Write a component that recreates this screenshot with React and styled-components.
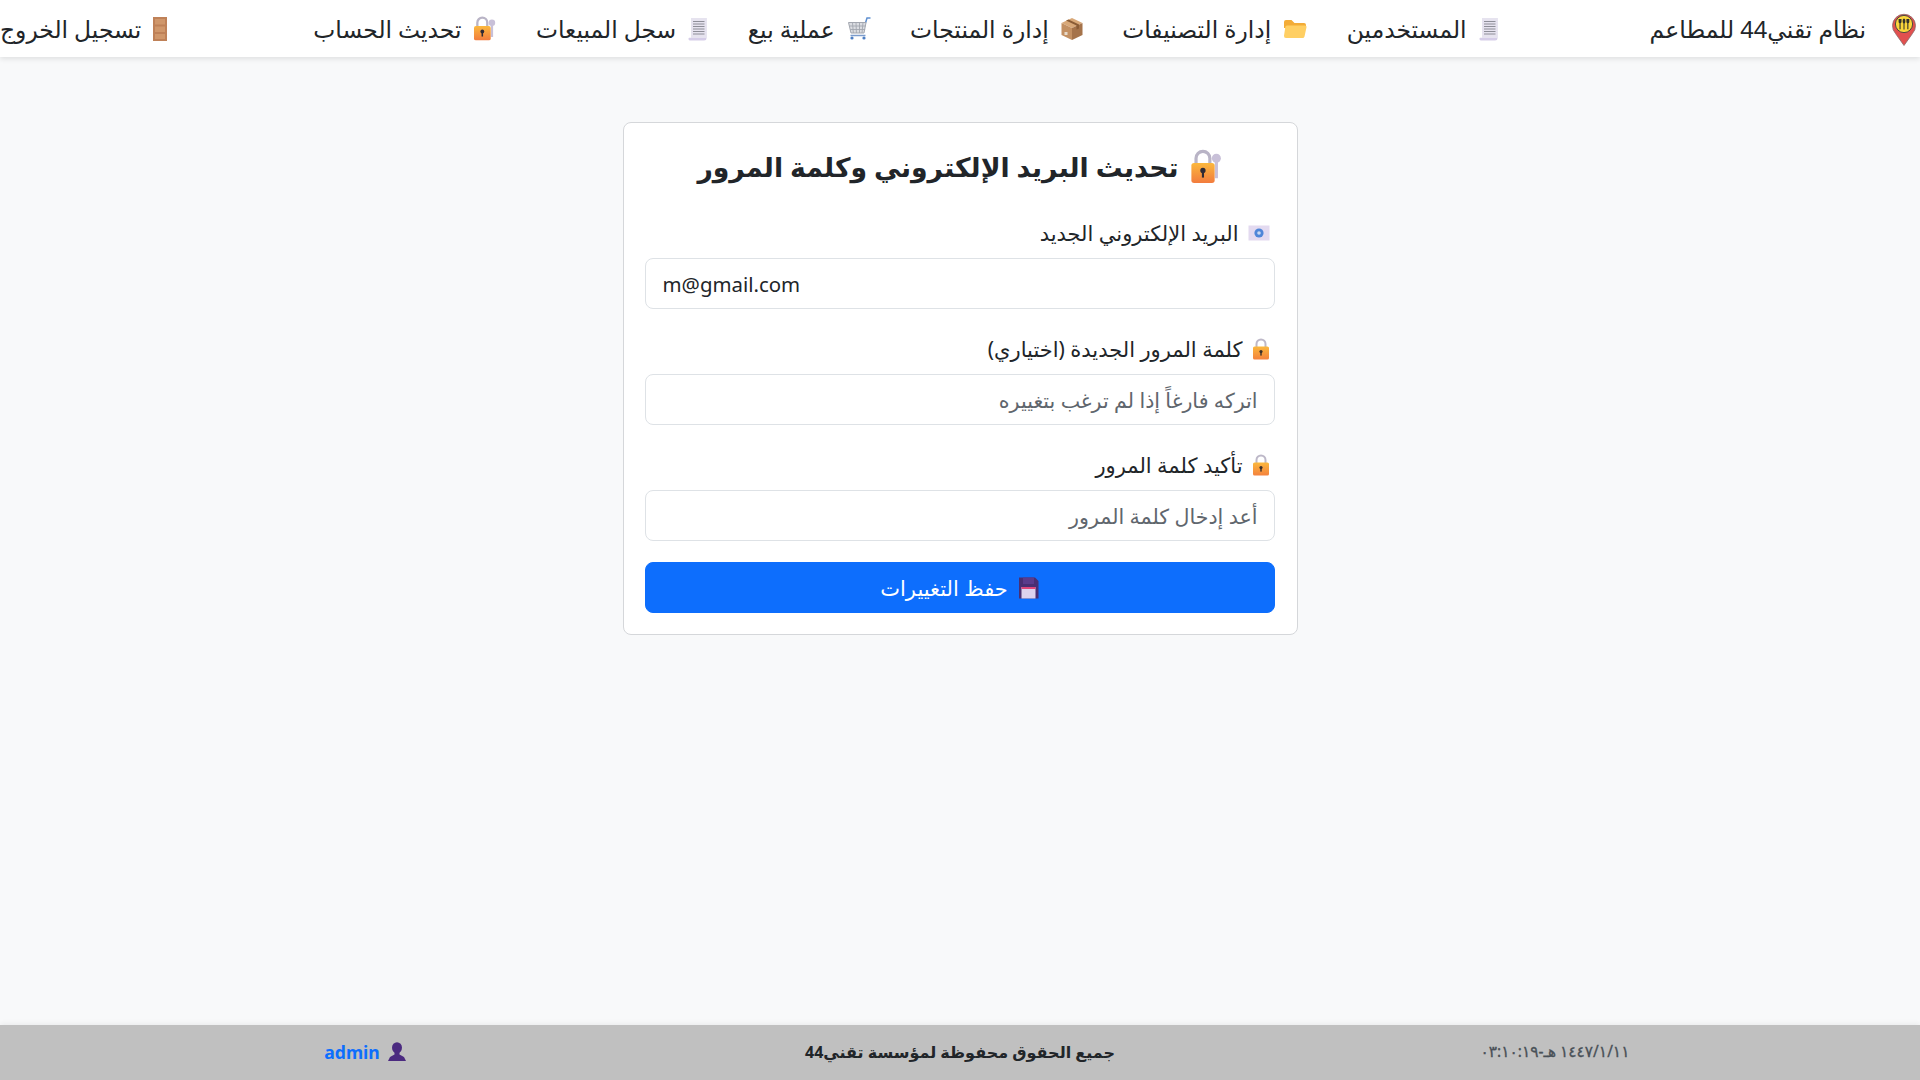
import React from "react";
import styled, { createGlobalStyle } from "styled-components";

const GlobalStyle = createGlobalStyle`
  * { box-sizing: border-box; }
  html, body { margin: 0; padding: 0; }
  body {
    background: #f8f9fa;
    color: #212529;
    font-family: "Noto Sans", "DejaVu Sans", sans-serif;
  }
`;

const Page = styled.div`
  min-height: 100vh;
  display: flex;
  flex-direction: column;
`;

const Navbar = styled.nav`
  height: 57px;
  background: #fff;
  box-shadow: 0 2px 5px rgba(0, 0, 0, 0.1);
  display: flex;
  align-items: center;
  padding-right: 4px;
`;

const Brand = styled.div`
  display: flex;
  align-items: center;
  gap: 26px;
  font-size: 23.5px;
  margin-left: 151px;
  white-space: nowrap;
`;

const NavList = styled.div`
  flex: 1;
  display: flex;
  align-items: center;
  gap: 39.5px;
`;

const NavLink = styled.a`
  display: flex;
  align-items: center;
  gap: 12px;
  font-size: 23.4px;
  color: #212529;
  white-space: nowrap;
  margin-right: ${({ $push }) => ($push ? "auto" : "0")};
`;

const Main = styled.main`
  flex: 1;
  padding-top: 65px;
  display: flex;
  justify-content: center;
  align-items: flex-start;
`;

const Card = styled.form`
  width: 675px;
  background: #fff;
  border: 1px solid #d5d7da;
  border-radius: 8px;
  padding: 18px 22px 21px 21px;
`;

const Title = styled.h1`
  margin: 0 0 25px;
  height: 50px;
  display: flex;
  align-items: center;
  justify-content: center;
  gap: 11px;
  font-size: 26.7px;
  font-weight: 700;
`;

const Field = styled.div`
  margin-bottom: 23px;
  &:last-of-type {
    margin-bottom: 21px;
  }
`;

const Label = styled.label`
  height: 34px;
  margin-bottom: 8px;
  padding-right: 5px;
  display: flex;
  align-items: center;
  gap: 9px;
  font-size: 21px;
`;

const Input = styled.input`
  display: block;
  width: 100%;
  height: 51px;
  padding: 0 16px 0 17px;
  font: inherit;
  font-size: ${({ dir }) => (dir === "ltr" ? "20.4px" : "20.6px")};
  color: #212529;
  background: #fff;
  border: 1px solid #dee2e6;
  border-radius: 8px;
  &::placeholder {
    color: #5f666d;
    opacity: 1;
  }
`;

const SaveButton = styled.button`
  width: 100%;
  height: 51px;
  display: flex;
  align-items: center;
  justify-content: center;
  gap: 10px;
  font: inherit;
  font-size: 21px;
  color: #fff;
  background: #0d6efd;
  border: 1px solid #0d6efd;
  border-radius: 8px;
`;

const Footer = styled.footer`
  height: 55px;
  padding-bottom: 2px;
  background: #c0c0c0;
  box-shadow: 0 -2px 5px rgba(0, 0, 0, 0.05);
  display: grid;
  grid-template-columns: repeat(3, 595px);
  justify-content: center;
  align-items: center;
  text-align: center;
`;

const DateText = styled.div`
  color: #495057;
  font-size: 15.4px;
  -webkit-text-stroke: 0.3px #495057;
`;

const Copyright = styled.div`
  font-size: 16px;
  font-weight: 700;
`;

const User = styled.div`
  display: flex;
  align-items: center;
  justify-content: center;
  gap: 8px;
  font-size: 17.6px;
  color: #0d6efd;
  font-weight: 700;
`;

const Logo = () => (
  <svg width="24" height="34" viewBox="0 0 24 34">
    <path d="M12 33.5 L3.5 21.5 A11.5 11.5 0 1 1 20.5 21.5 Z" fill="#e2504f" stroke="#8a6a6a" strokeWidth="0.8" />
    <circle cx="12" cy="12" r="8.6" fill="#fbd63b" stroke="#4b4b3f" strokeWidth="1" />
    <path d="M6.6 7v3a1.4 1.4 0 0 0 .9 1.3v6h1.1v-6a1.4 1.4 0 0 0 .9-1.3V7z" fill="#33312b" />
    <ellipse cx="12" cy="9" rx="1.4" ry="2.5" fill="#33312b" />
    <rect x="11.5" y="10.5" width="1" height="7" fill="#33312b" />
    <path d="M14.4 7v3a1.4 1.4 0 0 0 .9 1.3v6h1.1v-6a1.4 1.4 0 0 0 .9-1.3V7z" fill="#33312b" />
  </svg>
);

const ReceiptIcon = () => (
  <svg width="20" height="24" viewBox="0 0 20 24">
    <path d="M3 1h15.5v20a2.5 2.5 0 0 1-2.5 2.5H2a1.6 1.6 0 0 1-1-2.8h2z" fill="#d5cde8" />
    <rect x="3" y="1" width="15.5" height="20" fill="#e6e3ef" />
    <path d="M5 4.5h11.5M5 7h11.5M5 9.5h11.5M5 12h11.5M5 14.5h11.5M5 17h11.5" stroke="#8e8e98" strokeWidth="1" />
  </svg>
);

const FolderIcon = () => (
  <svg width="24" height="20" viewBox="0 0 24 20">
    <path d="M1 3A2 2 0 0 1 3 1h5.5l3 3H21a2 2 0 0 1 2 2v3H1z" fill="#f3ac37" />
    <path d="M4 6.5h18a1.5 1.5 0 0 1 1.5 1.8L21.5 17.5a2 2 0 0 1-2 1.5H3a2 2 0 0 1-2-2.2L2.3 8a1.8 1.8 0 0 1 1.7-1.5z" fill="#ffcf63" />
  </svg>
);

const BoxIcon = () => (
  <svg width="22" height="24" viewBox="0 0 22 24">
    <path d="M11 1L21.5 6 11 11 .5 6z" fill="#d8a878" />
    <path d="M.5 6L11 11v12L.5 18z" fill="#c39062" />
    <path d="M21.5 6L11 11v12l10.5-5z" fill="#a5734a" />
    <path d="M5 3.6l10.5 5v4l2.5-1.2V7.4L7.5 2.4z" fill="#8a5c36" />
    <rect x="3.5" y="15" width="3" height="3" fill="#e6d9c9" />
  </svg>
);

const CartIcon = () => (
  <svg width="24" height="23" viewBox="0 0 24 23" fill="none">
    <path d="M18.5 6l1.5-5h3.5" stroke="#5f8fd0" strokeWidth="1.5" />
    <path d="M1.5 5.5h17.5l-2 10.5H4z" fill="#dbdde2" stroke="#a3a7b0" strokeWidth="1" />
    <path d="M5.5 5.5l.8 10.5M9 5.5l.4 10.5M12.5 5.5V16M16 5.5L15 16M2.5 9h16M3.3 12.5h14.8" stroke="#a3a7b0" strokeWidth="0.9" />
    <path d="M3.5 18.5h15" stroke="#7c9ccc" strokeWidth="1.5" />
    <circle cx="5" cy="21" r="1.6" fill="#4f7fc4" />
    <circle cx="17" cy="21" r="1.6" fill="#4f7fc4" />
  </svg>
);

const LockKeyIcon = ({ size = 23 }) => (
  <svg width={size} height={size * 1.08} viewBox="0 0 24 26" fill="none">
    <defs>
      <linearGradient id="lockKeyBody" x1="0" y1="0" x2="0" y2="1">
        <stop offset="0" stopColor="#fbb83d" />
        <stop offset="1" stopColor="#f27c3e" />
      </linearGradient>
    </defs>
    <path d="M4.5 12V7a5.2 5.2 0 0 1 10.4 0v5" stroke="#b9b4c6" strokeWidth="2.4" />
    <rect x="18.6" y="7" width="2.4" height="15" fill="#c8c0d8" />
    <circle cx="19.8" cy="7" r="3.4" fill="#c8c0d8" />
    <rect x="1" y="10.5" width="17.5" height="15" rx="2" fill="url(#lockKeyBody)" />
    <circle cx="9.7" cy="16.2" r="2" fill="#2f2a35" />
    <rect x="8.9" y="16.5" width="1.6" height="5" fill="#2f2a35" />
  </svg>
);

const LockIcon = () => (
  <svg width="18" height="22" viewBox="0 0 18 22" fill="none">
    <defs>
      <linearGradient id="lockBody" x1="0" y1="0" x2="0" y2="1">
        <stop offset="0" stopColor="#fbb83d" />
        <stop offset="1" stopColor="#f4823e" />
      </linearGradient>
    </defs>
    <path d="M4.5 10V6a4.5 4.5 0 0 1 9 0v4" stroke="#bdb8c8" strokeWidth="2" />
    <rect x="1" y="8.5" width="16" height="13" rx="1.6" fill="url(#lockBody)" />
    <circle cx="9" cy="13.6" r="1.6" fill="#3a2f2a" />
    <rect x="8.3" y="14" width="1.4" height="3.6" fill="#3a2f2a" />
  </svg>
);

const DoorIcon = () => (
  <svg width="14" height="24" viewBox="0 0 14 24">
    <rect x="0" y="0" width="14" height="24" fill="#bf8158" />
    <rect x="2" y="2" width="10" height="5.5" fill="#d0976b" />
    <rect x="2" y="9.5" width="10" height="5.5" fill="#d0976b" />
    <rect x="2" y="17" width="10" height="5" fill="#d0976b" />
  </svg>
);

const MailIcon = () => (
  <svg width="22" height="16" viewBox="0 0 22 16">
    <rect x="0.5" y="0.5" width="21" height="15" fill="#e3daf0" />
    <circle cx="11" cy="8" r="4.6" fill="#4f86d8" />
    <circle cx="11" cy="8" r="1.8" fill="#c9d9f2" />
  </svg>
);

const SaveIcon = () => (
  <svg width="21" height="22" viewBox="0 0 21 22">
    <path d="M1 .5h16l3.5 3.5v17.5H1z" fill="#4a2e73" />
    <rect x="5" y=".5" width="11" height="6.5" fill="#5b3b8c" />
    <rect x="3.5" y="10" width="14" height="11.5" fill="#ddd2ee" />
    <rect x="3.5" y="10" width="14" height="2" fill="#e0467a" />
  </svg>
);

const UserIcon = () => (
  <svg width="18" height="19" viewBox="0 0 18 19">
    <ellipse cx="9" cy="5.8" rx="5" ry="5.6" fill="#4b2a80" />
    <path d="M6.5 10h5v2.4l4.5 2.6 2 4H0l2-4 4.5-2.6z" fill="#4b2a80" />
  </svg>
);

const links = [
  { text: "المستخدمين", icon: <ReceiptIcon /> },
  { text: "إدارة التصنيفات", icon: <FolderIcon /> },
  { text: "إدارة المنتجات", icon: <BoxIcon /> },
  { text: "عملية بيع", icon: <CartIcon /> },
  { text: "سجل المبيعات", icon: <ReceiptIcon /> },
  { text: "تحديث الحساب", icon: <LockKeyIcon /> },
];

const App = () => {
  return (
    <Page dir="rtl">
      <GlobalStyle />
      <Navbar>
        <Brand>
          <Logo />
          نظام تقني44 للمطاعم
        </Brand>
        <NavList>
          {links.map((link) => (
            <NavLink key={link.text}>
              {link.icon}
              {link.text}
            </NavLink>
          ))}
          <NavLink $push>
            <DoorIcon />
            تسجيل الخروج
          </NavLink>
        </NavList>
      </Navbar>
      <Main>
        <Card>
          <Title>
            <LockKeyIcon size={32} />
            تحديث البريد الإلكتروني وكلمة المرور
          </Title>
          <Field>
            <Label>
              <MailIcon />
              البريد الإلكتروني الجديد
            </Label>
            <Input dir="ltr" type="email" defaultValue="m@gmail.com" />
          </Field>
          <Field>
            <Label>
              <LockIcon />
              كلمة المرور الجديدة (اختياري)
            </Label>
            <Input type="password" placeholder="اتركه فارغاً إذا لم ترغب بتغييره" />
          </Field>
          <Field>
            <Label>
              <LockIcon />
              تأكيد كلمة المرور
            </Label>
            <Input type="password" placeholder="أعد إدخال كلمة المرور" />
          </Field>
          <SaveButton type="button">
            <SaveIcon />
            حفظ التغييرات
          </SaveButton>
        </Card>
      </Main>
      <Footer>
        <DateText>١١‏/١‏/١٤٤٧ هـ-٠٣:١٠:١٩</DateText>
        <Copyright>جميع الحقوق محفوظة لمؤسسة تقني44</Copyright>
        <User>
          <UserIcon />
          admin
        </User>
      </Footer>
    </Page>
  );
};

export default App;
